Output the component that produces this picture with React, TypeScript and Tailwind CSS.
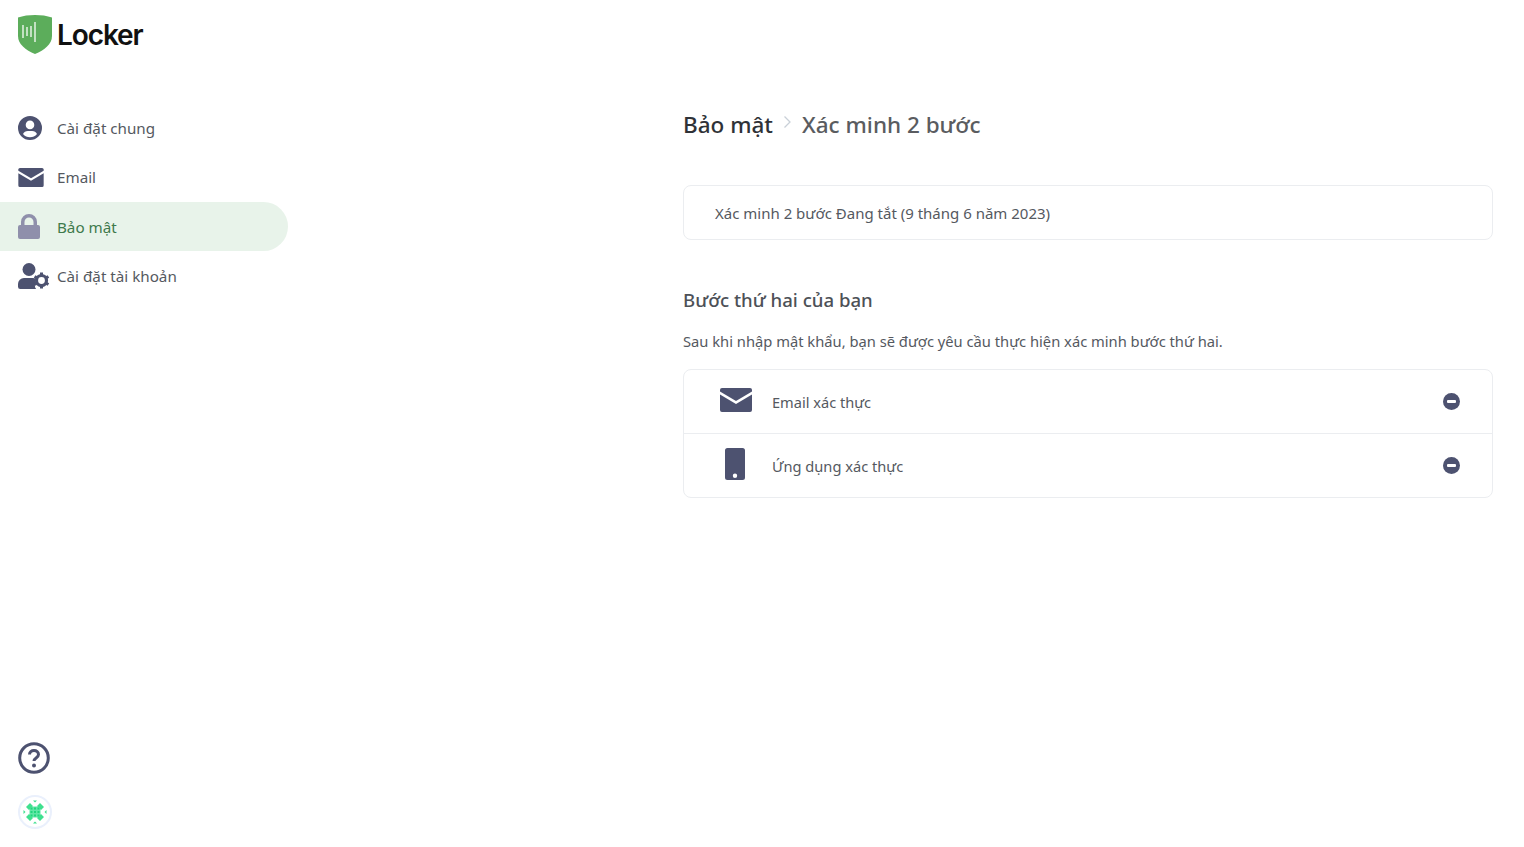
import React from 'react';

const NavIconUser = () => (
    <svg viewBox="0 0 24 24" className="w-[24px] h-[24px]" fill="#4d5270">
        <path fillRule="evenodd" d="M12 0a12 12 0 1 0 0 24 12 12 0 0 0 0-24Zm0 4.600a4.300 4.300 0 1 1 0 8.600 4.300 4.300 0 0 1 0-8.600Zm0 16.600a9.200 9.200 0 0 1-7-3.300c.9-1.800 2.700-3 4.800-3h4.400c2.100 0 3.900 1.200 4.800 3a9.200 9.200 0 0 1-7 3.300Z" />
    </svg>
);

const MailIcon = ({ className }: { className: string }) => (
    <svg viewBox="0 0 32 24" className={className} fill="#4d5270">
        <path d="M2 0h28a2 2 0 0 1 2 2v1.600L16 13 0 3.600V2a2 2 0 0 1 2-2Z" />
        <path d="M0 6.600 16 16 32 6.600V22a2 2 0 0 1-2 2H2a2 2 0 0 1-2-2V6.600Z" />
    </svg>
);

const LockIcon = () => (
    <svg viewBox="0 0 22 25" className="w-[22px] h-[25px]" fill="#8f8fab">
        <path fillRule="evenodd" d="M11 0a8 8 0 0 0-8 8v3H2a2 2 0 0 0-2 2v10a2 2 0 0 0 2 2h18a2 2 0 0 0 2-2V13a2 2 0 0 0-2-2h-1V8a8 8 0 0 0-8-8Zm-4.500 11V8a4.500 4.500 0 0 1 9 0v3h-9Z" />
    </svg>
);

const UserCogIcon = () => (
    <svg viewBox="0 0 32 26" className="w-[32px] h-[26px]" fill="#4d5270">
        <circle cx="11" cy="6.500" r="6.500" />
        <path d="M6 15h9c1 0 2 .2 2.800.6-.5 1.600-.2 3.200.3 4.400-1.600 1.600-1.600 4 0 6H2.200A2.200 2.200 0 0 1 0 23.800V21a6 6 0 0 1 6-6Z" />
        <g transform="translate(23.500 17.500)">
            <circle r="5" fill="none" stroke="#4d5270" strokeWidth="3.200" />
            <path d="M-1.500-8h3v3h-3ZM-1.500 5h3v3h-3Z" />
            <path d="M-1.500-8h3v3h-3ZM-1.500 5h3v3h-3Z" transform="rotate(60)" />
            <path d="M-1.500-8h3v3h-3ZM-1.500 5h3v3h-3Z" transform="rotate(120)" />
        </g>
    </svg>
);

const MinusCircle = () => (
    <svg viewBox="0 0 17 17" className="w-[17px] h-[17px]">
        <circle cx="8.500" cy="8.500" r="8.500" fill="#4d5270" />
        <rect x="4" y="7" width="9" height="3" rx="1" fill="#ffffff" />
    </svg>
);

const PhoneIcon = () => (
    <svg viewBox="0 0 20 32" className="w-[20px] h-[32px]" fill="#4d5270">
        <path fillRule="evenodd" d="M2.500 0h15A2.500 2.500 0 0 1 20 2.500v27a2.500 2.500 0 0 1-2.500 2.500h-15A2.500 2.500 0 0 1 0 29.500v-27A2.500 2.500 0 0 1 2.500 0ZM10 25.500a2.200 2.200 0 1 0 0 4.400 2.200 2.200 0 0 0 0-4.400Z" />
    </svg>
);

const navItems = [
    { label: 'Cài đặt chung', icon: <NavIconUser />, active: false },
    { label: 'Email', icon: <MailIcon className="w-[26px] h-[19px]" />, active: false },
    { label: 'Bảo mật', icon: <LockIcon />, active: true },
    { label: 'Cài đặt tài khoản', icon: <UserCogIcon />, active: false },
];

const App: React.FC = () => {
    return (
        <div className="flex h-[847px] bg-white text-[#55595f] font-['Noto_Sans',sans-serif] overflow-hidden">
            {/* Sidebar */}
            <aside className="w-[288px] shrink-0 flex flex-col">
                {/* Logo */}
                <div className="h-[103px] pt-[15px] pl-[18px] flex items-start gap-[5px]">
                    <svg viewBox="0 0 34 39" className="w-[34px] h-[39px] shrink-0">
                        <path d="M17 0c6 0 12 .8 17 2.500V21c0 8-7.500 14-17 18C7.500 35 0 29 0 21V2.500C5 .8 11 0 17 0Z" fill="#5cad5b" />
                        <path d="M5 10v13M9 12v9M13 11v11M17 7v20" stroke="#eef7ed" strokeWidth="1.400" fill="none" />
                    </svg>
                    <span className="font-['Inter',sans-serif] font-semibold text-[28px] leading-[40px] tracking-[-1.100px] text-[#111111]">Locker</span>
                </div>

                {/* Nav */}
                <nav className="flex flex-col">
                    {navItems.map((item) => (
                        <div key={item.label} className="h-[49.500px] flex items-center">
                            <div className={`w-full h-[49px] flex items-center rounded-r-[25px] ${item.active ? 'bg-[#e8f3ea] text-[#3f7a4c]' : ''}`}>
                                <div className="w-[57px] pl-[18px] flex items-center shrink-0">{item.icon}</div>
                                <span className="text-[15.200px] leading-5">{item.label}</span>
                            </div>
                        </div>
                    ))}
                </nav>

                {/* Help + widget */}
                <div className="mt-auto pl-[18px] pb-[18px] flex flex-col gap-[21px]">
                    <svg viewBox="0 0 32 32" className="w-[32px] h-[32px]">
                        <circle cx="16" cy="16" r="14.300" fill="none" stroke="#4d5270" strokeWidth="3" />
                        <path d="M11.500 12.500c0-2.500 2-4 4.500-4s4.500 1.500 4.500 4c0 3.500-4.500 3.500-4.500 6.500" fill="none" stroke="#4d5270" strokeWidth="3" />
                        <circle cx="16" cy="23.500" r="2" fill="#4d5270" />
                    </svg>
                    <div className="w-[34px] h-[34px] rounded-full border-2 border-[#eaf0fc] flex items-center justify-center">
                        <svg viewBox="0 0 26 26" className="w-[26px] h-[26px]" fill="#3fe08f">
                            <rect x="7.500" y="7.500" width="11" height="11" fill="#5fe6a5" />
                            <path d="M8.500 8.500h2v2h-2ZM15.500 8.500h2v2h-2ZM12 12h2v2h-2ZM8.500 15.500h2v2h-2ZM15.500 15.500h2v2h-2ZM12 8.500h2v2h-2ZM12 15.500h2v2h-2ZM8.500 12h2v2h-2ZM15.500 12h2v2h-2Z" fill="#1fd67c" />
                            <path d="M4 8l4-4 3 3-4 4ZM15 7l3-3 4 4-3 3ZM4 18l3-3 4 4-3 3ZM15 19l4-4 3 3-4 4Z" />
                            <path d="M13 3.500l-2-2h4ZM13 22.500l2 2h-4ZM3.500 13l-2 2v-4ZM22.500 13l2-2v4Z" />
                        </svg>
                    </div>
                </div>
            </aside>

            {/* Main */}
            <main className="flex-1 pl-[395px] pr-[31px] pt-[108px]">
                <div className="flex items-center h-[34px] text-[22.500px] font-medium leading-[34px]">
                    <span className="text-[#2f3237]">Bảo mật</span>
                    <svg viewBox="0 0 8 14" className="w-[8px] h-[14px] ml-[10px] mr-[11px] mb-[6px]" fill="none" stroke="#c9d0d8" strokeWidth="1.300">
                        <path d="M1.500 1.500 7 7l-5.500 5.500" />
                    </svg>
                    <span className="text-[#5a5c60]">Xác minh 2 bước</span>
                </div>

                <div className="mt-[43px] h-[55px] rounded-lg border border-[#ebedf0] pl-[31px] pt-[1px] flex items-center text-[15px]">
                    Xác minh 2 bước Đang tắt (9 tháng 6 năm 2023)
                </div>

                <h2 className="mt-[46px] text-[18.600px] leading-7 font-medium text-[#4d5157]">Bước thứ hai của bạn</h2>
                <p className="mt-[17px] text-[14.730px] leading-5">
                    Sau khi nhập mật khẩu, bạn sẽ được yêu cầu thực hiện xác minh bước thứ hai.
                </p>

                <div className="mt-[18px] rounded-lg border border-[#ebedf0] flex flex-col">
                    <div className="h-[64px] flex items-center border-b border-[#ebedf0]">
                        <div className="w-[88px] pl-[36px] shrink-0 flex items-center">
                            <MailIcon className="w-[32px] h-[24px] mb-[4px]" />
                        </div>
                        <span className="flex-1 text-[14.600px] pt-[2px]">Email xác thực</span>
                        <div className="pr-[32px]"><MinusCircle /></div>
                    </div>
                    <div className="h-[63px] flex items-center">
                        <div className="w-[88px] pl-[41px] shrink-0 flex items-center">
                            <div className="mb-[3px]"><PhoneIcon /></div>
                        </div>
                        <span className="flex-1 text-[14.650px] pt-[2px]">Ứng dụng xác thực</span>
                        <div className="pr-[32px]"><MinusCircle /></div>
                    </div>
                </div>
            </main>
        </div>
    );
};

export default App;
